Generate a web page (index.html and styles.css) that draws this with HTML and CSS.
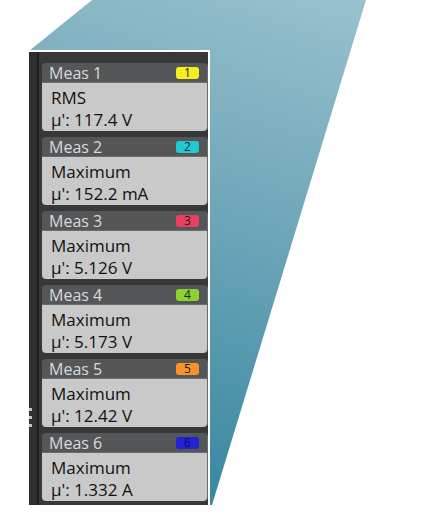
FILE: index.html
```html
<!DOCTYPE html>
<html>
<head>
<meta charset="utf-8">
<link rel="stylesheet" href="styles.css">
</head>
<body>
<div class="stage">
  <svg class="bg" width="432" height="528" viewBox="0 0 432 528">
    <defs>
      <linearGradient id="g" x1="360" y1="0" x2="200" y2="505" gradientUnits="userSpaceOnUse">
        <stop offset="0" stop-color="#98c1cd"/>
        <stop offset="0.45" stop-color="#6fa7b9"/>
        <stop offset="1" stop-color="#3887a1"/>
      </linearGradient>
    </defs>
    <polygon points="92,0 366,0 212,505 29,505 29,51" fill="url(#g)"/>
  </svg>
  <div class="panel">
    <div class="strip">
      <div class="grip"><span></span><span></span><span></span></div>
    </div>
    <div class="list">
      <div class="card">
        <div class="head"><span>Meas 1</span><span class="badge b1">1</span></div>
        <div class="body"><div>RMS</div><div>µ': 117.4 V</div></div>
      </div>
      <div class="card">
        <div class="head"><span>Meas 2</span><span class="badge b2">2</span></div>
        <div class="body"><div>Maximum</div><div>µ': 152.2 mA</div></div>
      </div>
      <div class="card">
        <div class="head"><span>Meas 3</span><span class="badge b3">3</span></div>
        <div class="body"><div>Maximum</div><div>µ': 5.126 V</div></div>
      </div>
      <div class="card">
        <div class="head"><span>Meas 4</span><span class="badge b4">4</span></div>
        <div class="body"><div>Maximum</div><div>µ': 5.173 V</div></div>
      </div>
      <div class="card">
        <div class="head"><span>Meas 5</span><span class="badge b5">5</span></div>
        <div class="body"><div>Maximum</div><div>µ': 12.42 V</div></div>
      </div>
      <div class="card">
        <div class="head"><span>Meas 6</span><span class="badge b6">6</span></div>
        <div class="body"><div>Maximum</div><div>µ': 1.332 A</div></div>
      </div>
    </div>
  </div>
</div>
</body>
</html>
```
FILE: styles.css
```css
* { box-sizing: border-box; }
html, body { margin: 0; padding: 0; background: #fff; }
body { font-family: "Open Sans", "Noto Sans", sans-serif; }
.stage {
  position: relative;
  width: 432px;
  height: 528px;
  padding: 50px 0 0 29px;
  overflow: hidden;
}
.bg { position: absolute; left: 0; top: 0; z-index: 0; }
.panel {
  position: relative;
  z-index: 1;
  width: 181px;
  height: 455px;
  display: flex;
  background: #383838;
  border-top: 2px solid #fff;
  border-right: 2px solid #fff;
}
.strip {
  position: relative;
  width: 10px;
  background: #2f2f2f;
  border-right: 2px solid #1d1d1d;
}
.grip {
  position: absolute;
  left: 0;
  top: 356px;
  display: flex;
  flex-direction: column;
  gap: 5px;
}
.grip span {
  display: block;
  width: 3px;
  height: 3px;
  background: #c8c8c8;
}
.list {
  flex: 1;
  display: flex;
  flex-direction: column;
  gap: 6px;
  padding: 11px 1px 4px 3px;
}
.card {
  height: 68px;
  border-radius: 4px;
  display: flex;
  flex-direction: column;
  box-shadow: 1px 0 0 #6a6a6a;
}
.head {
  height: 20px;
  flex: none;
  background: #555658;
  color: #d6dbde;
  font-size: 16px;
  line-height: 20px;
  padding: 0 8px 0 7px;
  display: flex;
  justify-content: space-between;
  align-items: center;
  border-bottom: 1px solid #6c6c6c;
  border-radius: 4px 4px 0 0;
}
.badge {
  width: 23px;
  height: 12px;
  border-radius: 3px;
  font-size: 12px;
  line-height: 12px;
  text-align: center;
  color: #222;
}
.b1 { background: #f2f01e; }
.b2 { background: #22c8d2; }
.b3 { background: #ec3e5e; }
.b4 { background: #8ed230; }
.b5 { background: #f8922a; }
.b6 { background: #2222d6; color: #0d0d60; }
.body {
  height: 48px;
  flex: none;
  background: #c9c9c9;
  color: #111;
  font-size: 17px;
  font-weight: 500;
  line-height: 22px;
  padding: 4px 0 0 9px;
  border-radius: 0 0 4px 4px;
}
```
